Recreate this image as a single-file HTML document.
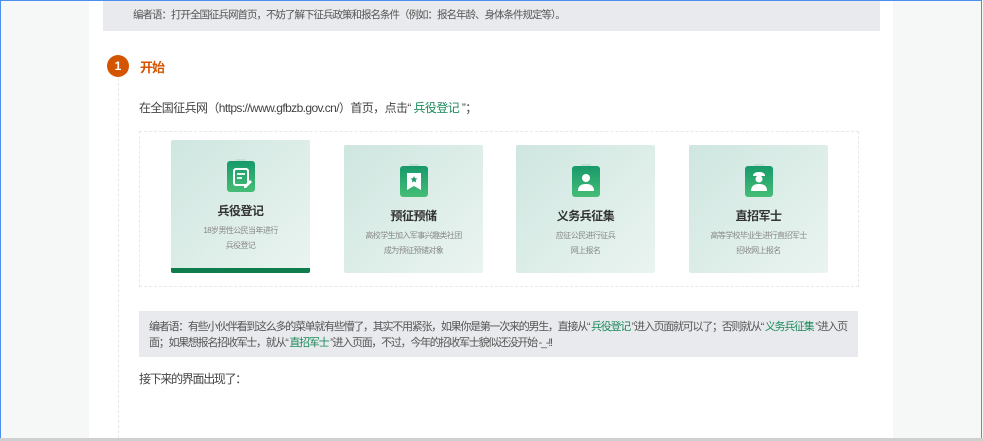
<!DOCTYPE html>
<html><head><meta charset="utf-8"><style>
*{margin:0;padding:0;box-sizing:border-box}
body{width:983px;height:441px;overflow:hidden;background:#f6f7f7;font-family:"Liberation Sans","Noto Sans CJK SC",sans-serif;position:relative;color:#333}
.frame{position:absolute;left:0;top:0;width:982px;height:439px;border:1px solid #4a90f0;border-bottom:none}
.bl{position:absolute;left:0;top:438px;width:983px;height:3px;background:#d0d0d0}
.main{position:absolute;left:89px;top:1px;width:804px;height:437px;background:#fff}
.abs{position:absolute}
.note1{left:103px;top:1px;width:777px;height:30px;background:#e9eaed;font-size:10.5px;letter-spacing:-1px;color:#555;line-height:29px;padding-left:30px}
.circ{left:107px;top:55px;width:22px;height:22px;border-radius:50%;background:#d45500;color:#fff;font-size:12px;font-weight:bold;text-align:center;line-height:22px}
.vl{left:118px;top:78px;height:360px;border-left:1px dashed #e6e6e6}
.h{left:140px;top:57px;font-size:13px;font-weight:bold;color:#d45500;letter-spacing:-1px}
.p{left:139px;top:99px;font-size:12px;color:#444;letter-spacing:-0.6px}
.g{color:#1d8a5c}
.box{left:139px;top:131px;width:720px;height:156px;border:1px dashed #e8e8e8}
.card{width:139px;height:128px;background:linear-gradient(135deg,#cfe6e0,#eaf4f0);border-radius:2px;text-align:center}
.card .ic{position:absolute;left:56px;width:28px;height:33px}
.card .t{position:absolute;left:0;width:100%;font-size:12px;font-weight:bold;color:#333;letter-spacing:-0.5px}
.card .d{position:absolute;left:0;width:100%;font-size:8px;line-height:15px;color:#888;letter-spacing:-0.6px}
.note2{left:139px;top:311px;width:719px;height:46px;background:#e9eaed;font-size:11px;letter-spacing:-1.27px;color:#555;line-height:16px;padding:8px 0 0 10px;white-space:nowrap;overflow:hidden}
.p2{left:139px;top:370px;font-size:12px;color:#444;letter-spacing:-1.3px}
</style></head><body>
<div class="main"></div>
<div class="abs note1">编者语：打开全国征兵网首页，不妨了解下征兵政策和报名条件（例如：报名年龄、身体条件规定等）。</div>
<div class="abs circ">1</div>
<div class="abs vl"></div>
<div class="abs h">开始</div>
<div class="abs p">在全国征兵网（https://www.gfbzb.gov.cn/）首页，点击“ <span class="g">兵役登记</span> ”；</div>
<div class="abs box"></div>
<svg width="0" height="0" style="position:absolute"><defs><linearGradient id="gr" x1="0" y1="0" x2="0" y2="1"><stop offset="0" stop-color="#17996a"/><stop offset="1" stop-color="#45bd76"/></linearGradient></defs></svg>

<div class="abs card" style="left:171px;top:140px;height:133px">
<svg class="ic" style="top:19px" viewBox="0 0 28 33"><rect x="9" y="0" width="10" height="3" rx="1" fill="#bfe0d2"/><rect x="0" y="2" width="28" height="31" rx="3" fill="url(#gr)"/><rect x="7" y="10" width="14" height="16" rx="2" fill="none" stroke="#fff" stroke-width="2"/><path d="M10 15h8M10 19h5" stroke="#fff" stroke-width="1.8"/><path d="M17 27l6-6 2 2-6 6h-2z" fill="#fff"/></svg>
<div class="t" style="top:62px">兵役登记</div>
<div class="d" style="top:83px">18岁男性公民当年进行<br>兵役登记</div>
<div style="position:absolute;left:0;bottom:0;width:100%;height:5px;background:#0f7c4e;border-radius:0 0 2px 2px"></div>
</div>

<div class="abs card" style="left:344px;top:145px">
<svg class="ic" style="top:19px" viewBox="0 0 28 33"><rect x="9" y="0" width="10" height="3" rx="1" fill="#bfe0d2"/><rect x="0" y="2" width="28" height="31" rx="3" fill="url(#gr)"/><path d="M7 9h14v17l-7-4-7 4z" fill="#fff"/><path d="M14 12l1 2.3 2.4.2-1.8 1.6.6 2.4-2.2-1.3-2.2 1.3.6-2.4-1.8-1.6 2.4-.2z" fill="#1d9a68"/></svg>
<div class="t" style="top:62px">预征预储</div>
<div class="d" style="top:83px">高校学生加入军事兴趣类社团<br>成为预征预储对象</div>
</div>

<div class="abs card" style="left:516px;top:145px">
<svg class="ic" style="top:19px" viewBox="0 0 28 33"><rect x="9" y="0" width="10" height="3" rx="1" fill="#bfe0d2"/><rect x="0" y="2" width="28" height="31" rx="3" fill="url(#gr)"/><circle cx="14" cy="14" r="4" fill="#fff"/><path d="M6 27c0-5 3-7 8-7s8 2 8 7z" fill="#fff"/></svg>
<div class="t" style="top:62px">义务兵征集</div>
<div class="d" style="top:83px">应征公民进行征兵<br>网上报名</div>
</div>

<div class="abs card" style="left:689px;top:145px">
<svg class="ic" style="top:19px" viewBox="0 0 28 33"><rect x="9" y="0" width="10" height="3" rx="1" fill="#bfe0d2"/><rect x="0" y="2" width="28" height="31" rx="3" fill="url(#gr)"/><path d="M8 12c0-3 3-4 6-4s6 1 6 4z" fill="#fff"/><circle cx="14" cy="15" r="3.5" fill="#fff"/><path d="M6 27c0-5 3-7 8-7s8 2 8 7z" fill="#fff"/></svg>
<div class="t" style="top:62px">直招军士</div>
<div class="d" style="top:83px">高等学校毕业生进行直招军士<br>招收网上报名</div>
</div>

<div class="abs note2">编者语：有些小伙伴看到这么多的菜单就有些懵了，其实不用紧张，如果你是第一次来的男生，直接从“ <span class="g">兵役登记</span> ”进入页面就可以了；否则就从“ <span class="g">义务兵征集</span> ”进入页<br>面；如果想报名招收军士，就从“ <span class="g">直招军士</span> ”进入页面，不过，今年的招收军士貌似还没开始 -_-!!</div>
<div class="abs p2">接下来的界面出现了：</div>
<div class="frame"></div>
<div class="bl"></div>
</body></html>
